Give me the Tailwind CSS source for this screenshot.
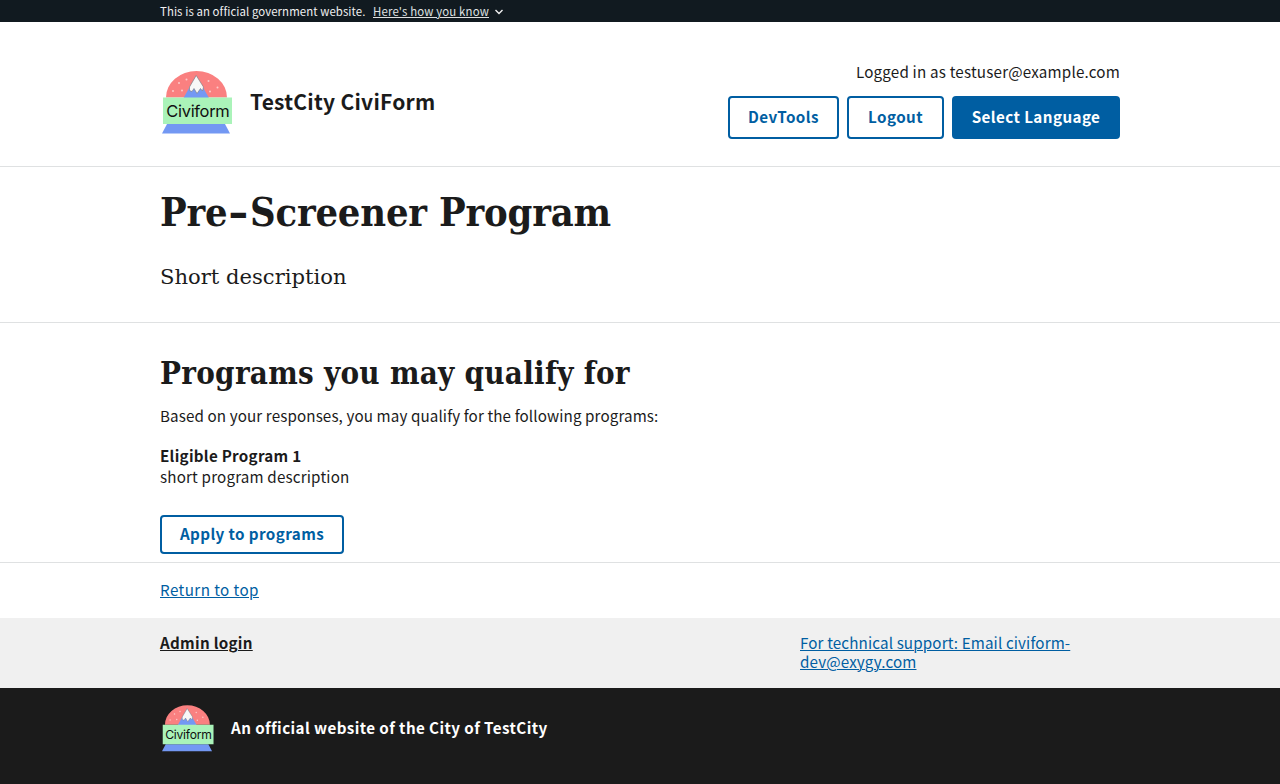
<!DOCTYPE html>
<html lang="en">
<head>
<meta charset="utf-8">
<title>TestCity CiviForm</title>
<script src="https://cdn.jsdelivr.net/npm/@tailwindcss/browser@4"></script>
</head>
<body class="w-[1280px] h-[784px] overflow-hidden bg-white text-[#1b1b1b] font-['Noto_Sans_CJK_SC','Noto_Sans',sans-serif] text-[15.2px] leading-[20px]">
<svg class="hidden">
  <symbol id="logo" viewBox="0 0 72 64">
    <path d="M4 27.500a30.500 26.500 0 0 1 61 0z" fill="#fa8080"/>
    <path d="M21.500 28L34.200 5.500 47 28z" fill="#7398f3"/>
    <path d="M34.200 5.500L27.500 17v3.500l2.500 1 2-3 3 5 3.500-5 2 2.500 1-4z" fill="#f8f8f8" stroke="#777" stroke-width=".6"/>
    <g fill="#fccaca"><circle cx="17" cy="13" r="1"/><circle cx="24.500" cy="9.500" r="1"/><circle cx="11" cy="21" r="1"/><circle cx="20" cy="20.500" r="1"/><circle cx="46.500" cy="11" r="1"/><circle cx="55.500" cy="17.500" r="1"/><circle cx="48" cy="21.500" r="1"/></g>
    <path d="M5 54h58l5 9.500H0z" fill="#7398f3"/>
    <path d="M1 27.500h69V54H1z" fill="#aaf3b9"/>
    <text x="4.300" y="47" font-family="Inter, sans-serif" font-size="16.500" font-weight="400" textLength="63.500" fill="#111">Civiform</text>
  </symbol>
</svg>
<section class="h-[22px] bg-[#111a20] text-[#f0f0f0] text-[11.4px] leading-[22px]">
  <div class="mx-40 flex items-center gap-2 whitespace-nowrap">
    <span class="w-[205px] tracking-[0.085px]">This is an official government website.</span>
    <span class="flex items-center gap-[6px]"><a class="text-[#dfe1e2] underline underline-offset-1 decoration-1 w-[116px] tracking-[0.16px]">Here's how you know</a>
    <svg class="mt-px w-2 h-[6px]" viewBox="0 0 8 6" fill="none" stroke="#f0f0f0" stroke-width="1.400"><path d="M.5 1L4 4.500 7.500 1"/></svg></span>
  </div>
</section>
<header class="h-[145px] border-b border-[#dfe1e2]">
  <div class="mx-40 flex justify-between whitespace-nowrap">
    <div class="flex pt-[48px] pl-[2px] gap-4">
      <svg class="w-[72px] h-[64px]"><use href="#logo"/></svg>
      <div class="pt-[16px] text-[21px] leading-[30px] font-bold tracking-[0.25px]">TestCity CiviForm</div>
    </div>
    <div class="flex flex-col items-end pt-[39px]">
      <div class="h-[35px] tracking-[0.19px]">Logged in as testuser@example.com</div>
      <div class="flex gap-2 h-[43px] font-bold text-[#005ea2] tracking-[0.42px]">
        <button class="w-[111px] rounded border-2 border-[#005ea2] pb-[3px]">DevTools</button>
        <button class="w-[97px] rounded border-2 border-[#005ea2] pb-[3px]">Logout</button>
        <button class="w-[168px] rounded bg-[#005ea2] text-white pb-[3px]">Select Language</button>
      </div>
    </div>
  </div>
</header>
<main class="whitespace-nowrap">
  <section class="h-[156px] border-b border-[#dfe1e2] px-40 pt-[20px] font-['DejaVu_Serif_Condensed','DejaVu_Serif',serif]">
    <h1 class="text-[39.5px] leading-[50px] font-bold tracking-[-0.2px]">Pre<span class="inline-block px-[4px] scale-x-140">-</span>Screener Program</h1>
    <p class="pt-[25px] text-[21.1px] leading-[30px] font-['DejaVu_Serif',serif]">Short description</p>
  </section>
  <section class="h-[240px] border-b border-[#dfe1e2] px-40 pt-[30px]">
    <h2 class="text-[31px] leading-[40px] font-bold tracking-[0.28px] font-['DejaVu_Serif_Condensed','DejaVu_Serif',serif]">Programs you may qualify for</h2>
    <p class="pt-[12px] tracking-[0.11px]">Based on your responses, you may qualify for the following programs:</p>
    <p class="pt-[20px] font-bold tracking-[0.27px]">Eligible Program 1</p>
    <p class="pt-px tracking-[0.17px]">short program description</p>
    <button class="mt-[29px] block w-[184px] h-[39px] rounded border-2 border-[#005ea2] pb-[3px] font-bold text-[#005ea2] tracking-[0.4px]">Apply to programs</button>
  </section>
</main>
<footer>
  <div class="h-[55px] px-40 pt-[16px]"><a class="text-[#005ea2] underline underline-offset-1 decoration-1 tracking-[0.42px]">Return to top</a></div>
  <div class="h-[70px] bg-[#f0f0f0] px-40 pt-[15px] flex justify-between leading-[19px]">
    <a class="font-bold underline underline-offset-1 decoration-1 tracking-[0.28px]">Admin login</a>
    <a class="w-[320px] text-[#005ea2] underline underline-offset-1 decoration-1 tracking-[0.13px]">For technical support: Email civiform-<br>dev@exygy.com</a>
  </div>
  <div class="h-[96px] bg-[#1b1b1b] text-white pl-[162px] pt-[16px] flex gap-4">
    <svg class="w-[53px] h-[48px]"><use href="#logo"/></svg>
    <p class="pt-[13px] font-bold tracking-[0.41px]">An official website of the City of TestCity</p>
  </div>
</footer>
</body>
</html>
